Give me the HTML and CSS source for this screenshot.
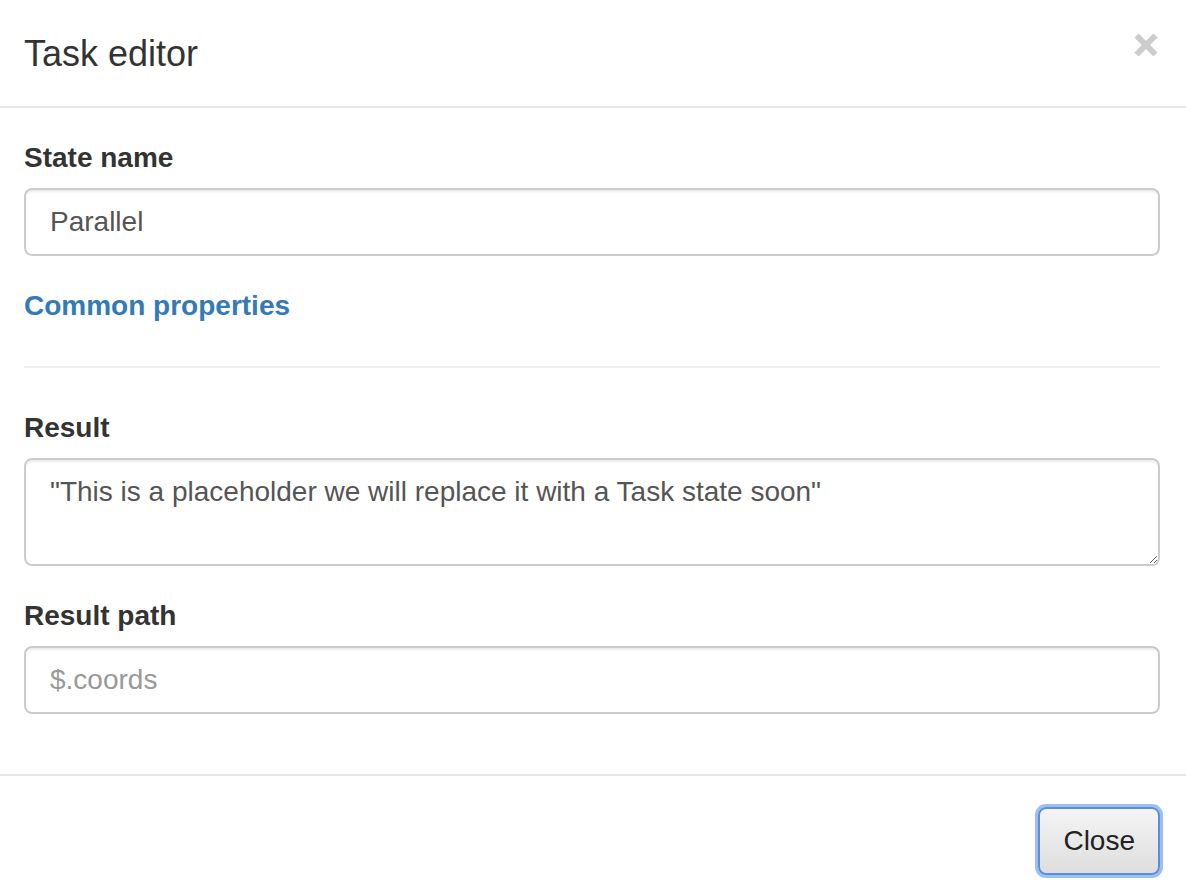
FILE: index.html
```html
<!DOCTYPE html>
<html lang="en">
<head>
<meta charset="utf-8">
<title>Task editor</title>
<link rel="stylesheet" href="styles.css">
</head>
<body>
<div class="modal">
  <div class="modal-header">
    <h4 class="modal-title">Task editor</h4>
    <button class="close" type="button" aria-label="Close">
      <svg width="24" height="24" viewBox="0 0 24 24" aria-hidden="true">
        <path d="M2.5 2.5 L21.5 21.5 M21.5 2.5 L2.5 21.5" stroke="#cccccc" stroke-width="6" fill="none"/>
      </svg>
    </button>
  </div>
  <div class="modal-body">
    <div class="form-group">
      <label class="label">State name</label>
      <input class="form-control" type="text" value="Parallel">
    </div>
    <div class="section-link"><a href="#">Common properties</a></div>
    <hr class="divider">
    <div class="form-group">
      <label class="label">Result</label>
      <textarea class="form-control textarea">"This is a placeholder we will replace it with a Task state soon"</textarea>
    </div>
    <div class="form-group last">
      <label class="label">Result path</label>
      <input class="form-control" type="text" placeholder="$.coords">
    </div>
  </div>
  <div class="modal-footer">
    <button class="btn" type="button">Close</button>
  </div>
</div>
</body>
</html>
```

FILE: styles.css
```css
* { box-sizing: border-box; }

html, body {
  margin: 0;
  padding: 0;
  background: #fff;
}

body {
  font-family: "Liberation Sans", Arial, Helvetica, sans-serif;
  color: #333;
  font-size: 28px;
  line-height: 40px;
  overflow: hidden;
}

.modal {
  width: 1186px;
}

.modal-header {
  display: flex;
  justify-content: space-between;
  align-items: flex-start;
  padding: 28px 26px 27px 24px;
  border-bottom: 2px solid #e5e5e5;
  height: 108px;
}

.modal-title {
  margin: 0;
  font-size: 36px;
  font-weight: normal;
  line-height: 51px;
  color: #333;
}

.close {
  margin: 5px 2px 0 0;
  padding: 0;
  border: 0;
  background: transparent;
  width: 24px;
  height: 24px;
  display: flex;
}

.modal-body {
  padding: 30px 26px 30px 24px;
}

.form-group {
  display: flex;
  flex-direction: column;
  margin-bottom: 30px;
}

.form-group.last {
  margin-bottom: 30px;
}

.label {
  font-weight: bold;
  font-size: 28px;
  line-height: 40px;
  margin-bottom: 10px;
  color: #333;
}

.form-control {
  display: block;
  width: 100%;
  height: 68px;
  padding: 12px 24px;
  font-family: "Liberation Sans", Arial, Helvetica, sans-serif;
  font-size: 28px;
  line-height: 40px;
  color: #555;
  background: #fff;
  border: 2px solid #ccc;
  border-radius: 8px;
  box-shadow: inset 0 2px 2px rgba(0, 0, 0, 0.075);
  outline: none;
}

.form-control::placeholder {
  color: #999;
}

.textarea {
  height: 108px;
  resize: vertical;
}

.section-link {
  font-weight: bold;
  font-size: 28px;
  line-height: 40px;
}

.section-link a {
  color: #337ab7;
  text-decoration: none;
}

.divider {
  margin: 40px 0;
  border: 0;
  border-top: 2px solid #eee;
}

.modal-footer {
  display: flex;
  justify-content: flex-end;
  padding: 31px 26px 30px 24px;
  border-top: 2px solid #e5e5e5;
}

.btn {
  font-family: "Liberation Sans", Arial, Helvetica, sans-serif;
  font-size: 28px;
  line-height: 40px;
  color: #222;
  padding: 12px 23px;
  height: 68px;
  border: 2px solid #5a8ed6;
  border-radius: 8px;
  background: linear-gradient(#f4f4f4, #dedede);
  box-shadow: 0 0 0 3px rgba(120, 170, 240, 0.75);
}
```
